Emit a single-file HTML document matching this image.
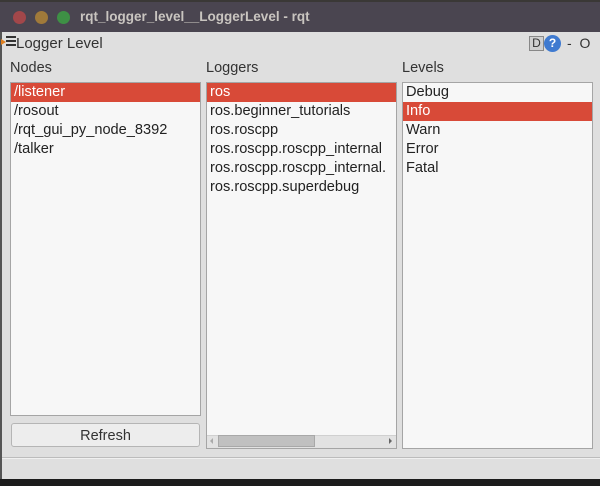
<!DOCTYPE html>
<html><head><style>
*{margin:0;padding:0;box-sizing:border-box}
body{width:600px;height:486px;background:#dfdfdf;font-family:"Liberation Sans",sans-serif;font-size:14px;color:#333;position:relative;overflow:hidden}
.tb{position:absolute;left:0;top:0;width:600px;height:32px;background:#4a4550;border-top:2px solid #3a3836}
.dot{position:absolute;top:9px;width:13px;height:13px;border-radius:50%}
.tt{position:absolute;left:80px;top:7px;color:#c9c5c0;font-weight:bold;font-size:13.5px}
.lb{position:absolute;left:0;top:32px;width:2px;height:447px;background:#555}
.abs{position:absolute}
.list{position:absolute;background:#f7f7f7;border:1px solid #a5a5a5}
.row{height:19px;line-height:19px;padding-left:3px;white-space:nowrap;overflow:hidden;color:#222;font-size:14.6px}
.sel{background:#d84a38;color:#fff}
.lab{position:absolute;top:60px;font-size:14.5px;color:#333}
</style></head><body>
<div class="tb">
<div class="dot" style="left:13px;background:#a2474a"></div>
<div class="dot" style="left:35px;background:#a07a3a"></div>
<div class="dot" style="left:57px;background:#3e9045"></div>
<div class="tt">rqt_logger_level__LoggerLevel - rqt</div>
</div>
<div class="lb"></div>
<div class="abs" style="left:1px;top:35px;width:15px;height:14px">
<div class="abs" style="left:0;top:4px;width:0;height:0;border-left:5px solid #e08020;border-top:3px solid transparent;border-bottom:3px solid transparent"></div>
<div class="abs" style="left:5px;top:1px;width:10px;height:2px;background:#333"></div>
<div class="abs" style="left:5px;top:5px;width:10px;height:2px;background:#333"></div>
<div class="abs" style="left:5px;top:9px;width:10px;height:2px;background:#333"></div>
</div>
<div class="abs" style="left:16px;top:35px;font-size:15px;color:#333">Logger Level</div>
<div class="abs" style="left:529px;top:36px;width:15px;height:15px;border:1px solid #888;background:#d0d0d0;font-size:12px;line-height:13px;text-align:center">D</div>
<div class="abs" style="left:544px;top:35px;width:17px;height:17px;border-radius:50%;background:#3f7ad0;color:#fff;font-weight:bold;font-size:12px;line-height:17px;text-align:center">?</div>
<div class="abs" style="left:567px;top:35px;color:#333">-&nbsp;&nbsp;O</div>
<div class="lab" style="left:10px">Nodes</div>
<div class="lab" style="left:206px">Loggers</div>
<div class="lab" style="left:402px">Levels</div>
<div class="list" style="left:10px;top:82px;width:191px;height:334px">
<div class="row sel">/listener</div><div class="row">/rosout</div><div class="row">/rqt_gui_py_node_8392</div><div class="row">/talker</div>
</div>
<div class="list" style="left:206px;top:82px;width:191px;height:367px">
<div class="row sel">ros</div><div class="row">ros.beginner_tutorials</div><div class="row">ros.roscpp</div><div class="row">ros.roscpp.roscpp_internal</div><div class="row">ros.roscpp.roscpp_internal.</div><div class="row">ros.roscpp.superdebug</div>
<div class="abs" style="left:0;bottom:0;width:189px;height:13px;background:#e2e2e2;border-top:1px solid #d0d0d0"></div>
<div class="abs" style="left:11px;bottom:1px;width:97px;height:12px;background:#c0c0c0;border:1px solid #a8a8a8"></div>
<div class="abs" style="left:3px;bottom:4px;width:0;height:0;border-right:3px solid #aaa;border-top:3px solid transparent;border-bottom:3px solid transparent"></div>
<div class="abs" style="right:4px;bottom:4px;width:0;height:0;border-left:3px solid #666;border-top:3px solid transparent;border-bottom:3px solid transparent"></div>
</div>
<div class="list" style="left:402px;top:82px;width:191px;height:367px">
<div class="row">Debug</div><div class="row sel">Info</div><div class="row">Warn</div><div class="row">Error</div><div class="row">Fatal</div>
</div>
<div class="abs" style="left:11px;top:423px;width:189px;height:24px;border:1px solid #b5b5b5;border-radius:3px;background:#ededed;text-align:center;line-height:24px;font-size:14.5px;color:#333">Refresh</div>
<div class="abs" style="left:2px;top:457px;width:598px;height:1px;background:#bcbcbc"></div>
<div class="abs" style="left:2px;top:458px;width:598px;height:1px;background:#f0f0f0"></div>
<div class="abs" style="left:0;top:479px;width:600px;height:7px;background:#1c1c1c"></div>
</body></html>
